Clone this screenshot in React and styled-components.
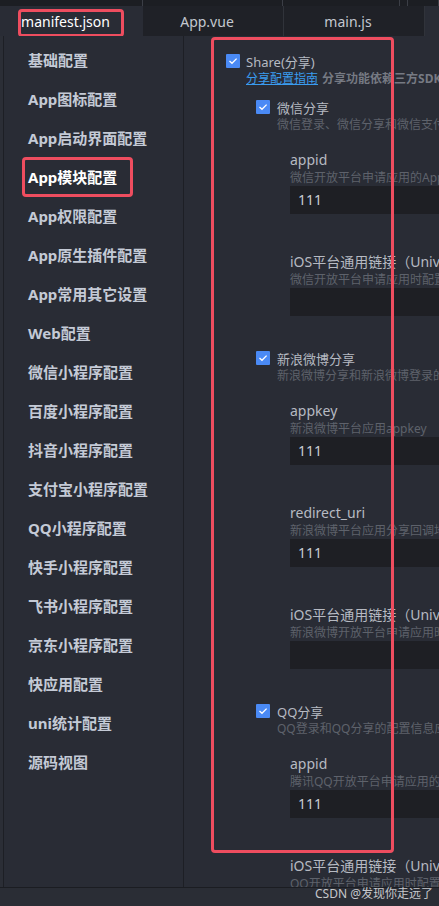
import React from "react";
import styled, { createGlobalStyle } from "styled-components";

const GlobalStyle = createGlobalStyle`
  html, body {
    margin: 0;
    padding: 0;
    background: #292c35;
  }
  body {
    font-family: "Noto Sans", "Noto Sans CJK SC", sans-serif;
    overflow: hidden;
  }
`;

const Window = styled.div`
  position: relative;
  width: 439px;
  height: 906px;
  display: flex;
  flex-direction: column;
  background: #292c35;
  overflow: hidden;
`;

const TopStrip = styled.div`
  height: 6px;
  display: flex;
  background: #1c1e23;
`;

const StripSeg = styled.div`
  width: ${p => p.w}px;
  flex: ${p => (p.w ? "none" : 1)};
  border-right: 1px solid #3b3e46;
  box-sizing: border-box;
`;

const TabBar = styled.div`
  height: 30px;
  display: flex;
`;

const Tab = styled.div`
  position: relative;
  width: ${p => p.w}px;
  box-sizing: border-box;
  display: flex;
  align-items: center;
  justify-content: center;
  padding-right: 12px;
  font-size: 14px;
  color: ${p => (p.active ? "#ffffff" : "#c3c8d0")};
  background: ${p => (p.active ? "#292c35" : "#1f2127")};
  border-right: ${p => (p.active ? "none" : "1px solid #30333a")};
`;

const Mark = styled.div`
  position: absolute;
  border: 3px solid #ee4d5f;
  border-radius: 4px;
  box-sizing: border-box;
  pointer-events: none;
`;

const Main = styled.div`
  flex: 1;
  display: flex;
  min-height: 0;
  padding-left: 3px;
  background: #2b2e36;
`;

const Sidebar = styled.div`
  position: relative;
  width: 181px;
  flex: none;
  box-sizing: border-box;
  border-left: 1px solid #1d1f25;
  border-right: 1px solid #1d1f25;
  background: #292c35;
  padding-top: 5px;
`;

const NavItem = styled.div`
  position: relative;
  height: 39px;
  line-height: 39px;
  padding-left: 24px;
  font-size: 15px;
  font-weight: 700;
  white-space: nowrap;
  color: ${p => (p.active ? "#ffffff" : "#c4cad6")};
`;

const Content = styled.div`
  position: relative;
  flex: 1;
  min-width: 0;
  overflow: hidden;
  padding: 16px 0 0 42px;
  background: #292c35;
  white-space: nowrap;
`;

const CheckRow = styled.div`
  display: flex;
  align-items: center;
  gap: ${p => p.gap}px;
  height: 18px;
  font-size: 13px;
  color: #b6bac2;
`;

const Box = styled.span`
  width: 14px;
  height: 14px;
  flex: none;
  display: flex;
  align-items: center;
  justify-content: center;
  background: #4a8af5;
  border-radius: 1px;
`;

const Line = styled.div`
  height: ${p => p.h || 18}px;
  line-height: ${p => p.h || 18}px;
  font-size: 12px;
  padding-left: ${p => p.indent || 0}px;
  color: #5e626b;
`;

const Link = styled.span`
  color: #3a9cf0;
  text-decoration: underline;
`;

const Note = styled.span`
  color: #767a83;
  font-weight: 700;
  margin-left: 4px;
`;

const Section = styled.div`
  margin-top: ${p => p.top}px;
  padding-left: 30px;
`;

const Fields = styled.div`
  padding: 17px 0 0 34px;
  display: flex;
  flex-direction: column;
  gap: 39px;
`;

const FieldLabel = styled.div`
  height: 18px;
  line-height: 18px;
  font-size: 14px;
  color: #b6bac2;
`;

const Input = styled.div`
  width: 320px;
  height: 28px;
  line-height: 28px;
  box-sizing: border-box;
  padding-left: 8px;
  background: #1e1f24;
  font-size: 14px;
  color: #c9cdd3;
`;

const BottomBar = styled.div`
  height: 18px;
  flex: none;
  border-top: 1px solid #1b1d22;
  background: #2a2d35;
`;

const Watermark = styled.div`
  position: absolute;
  right: 6px;
  bottom: 5px;
  font-size: 12px;
  line-height: 14px;
  color: #c6c8cc;
`;

const Check = () => (
  <Box>
    <svg width="10" height="8" viewBox="0 0 10 8">
      <path d="M1.5 4 L4 6.3 L8.6 1.6" fill="none" stroke="#fff" strokeWidth="1.3" />
    </svg>
  </Box>
);

const nav = [
  "基础配置",
  "App图标配置",
  "App启动界面配置",
  "App模块配置",
  "App权限配置",
  "App原生插件配置",
  "App常用其它设置",
  "Web配置",
  "微信小程序配置",
  "百度小程序配置",
  "抖音小程序配置",
  "支付宝小程序配置",
  "QQ小程序配置",
  "快手小程序配置",
  "飞书小程序配置",
  "京东小程序配置",
  "快应用配置",
  "uni统计配置",
  "源码视图"
];

const sections = [
  {
    title: "微信分享",
    desc: "微信登录、微信分享和微信支付的配置信息",
    top: 10,
    fields: [
      { label: "appid", desc: "微信开放平台申请应用的AppID", value: "111" },
      { label: "iOS平台通用链接（Universal Links）", desc: "微信开放平台申请应用时配置的通用链接", value: "" }
    ]
  },
  {
    title: "新浪微博分享",
    desc: "新浪微博分享和新浪微博登录的配置信息",
    top: 33,
    fields: [
      { label: "appkey", desc: "新浪微博平台应用appkey", value: "111" },
      { label: "redirect_uri", desc: "新浪微博平台应用分享回调地址", value: "111" },
      { label: "iOS平台通用链接（Universal Links）", desc: "新浪微博开放平台申请应用时配置的通用链接", value: "" }
    ]
  },
  {
    title: "QQ分享",
    desc: "QQ登录和QQ分享的配置信息应用",
    top: 33,
    fields: [
      { label: "appid", desc: "腾讯QQ开放平台申请应用的AppID", value: "111" },
      { label: "iOS平台通用链接（Universal Links）", desc: "QQ开放平台申请应用时配置的通用链接", value: "" }
    ]
  }
];

export default function App() {
  return (
    <Window>
      <GlobalStyle />
      <TopStrip>
        <StripSeg w={143} />
        <StripSeg w={140} />
        <StripSeg w={117} />
        <StripSeg w={8} />
        <StripSeg />
      </TopStrip>

      <TabBar>
        <Tab w={143} active>
          manifest.json
          <Mark style={{ left: 18, top: 3, width: 106, height: 28 }} />
        </Tab>
        <Tab w={141}>App.vue</Tab>
        <Tab w={141}>main.js</Tab>
      </TabBar>

      <Main>
        <Sidebar>
          {nav.map(item => (
            <NavItem key={item} active={item === "App模块配置"}>
              {item}
              {item === "App模块配置" && (
                <Mark style={{ left: 18, top: -1, width: 111, height: 40 }} />
              )}
            </NavItem>
          ))}
        </Sidebar>

        <Content>
          <CheckRow gap={6}>
            <Check />
            Share(分享)
          </CheckRow>
          <Line indent={20}>
            <Link>分享配置指南</Link>
            <Note>分享功能依赖三方SDK，请在模块配置中勾选</Note>
          </Line>

          {sections.map(section => (
            <Section key={section.title} top={section.top}>
              <CheckRow gap={7}>
                <Check />
                {section.title}
              </CheckRow>
              <Line indent={21}>{section.desc}</Line>
              <Fields>
                {section.fields.map((field, i) => (
                  <div key={i}>
                    <FieldLabel>{field.label}</FieldLabel>
                    <Line h={17}>{field.desc}</Line>
                    <Input>{field.value}</Input>
                  </div>
                ))}
              </Fields>
            </Section>
          ))}

          <Mark style={{ left: 27, top: 1, width: 183, height: 816 }} />
        </Content>
      </Main>

      <BottomBar />
      <Watermark>CSDN @发现你走远了</Watermark>
    </Window>
  );
}
